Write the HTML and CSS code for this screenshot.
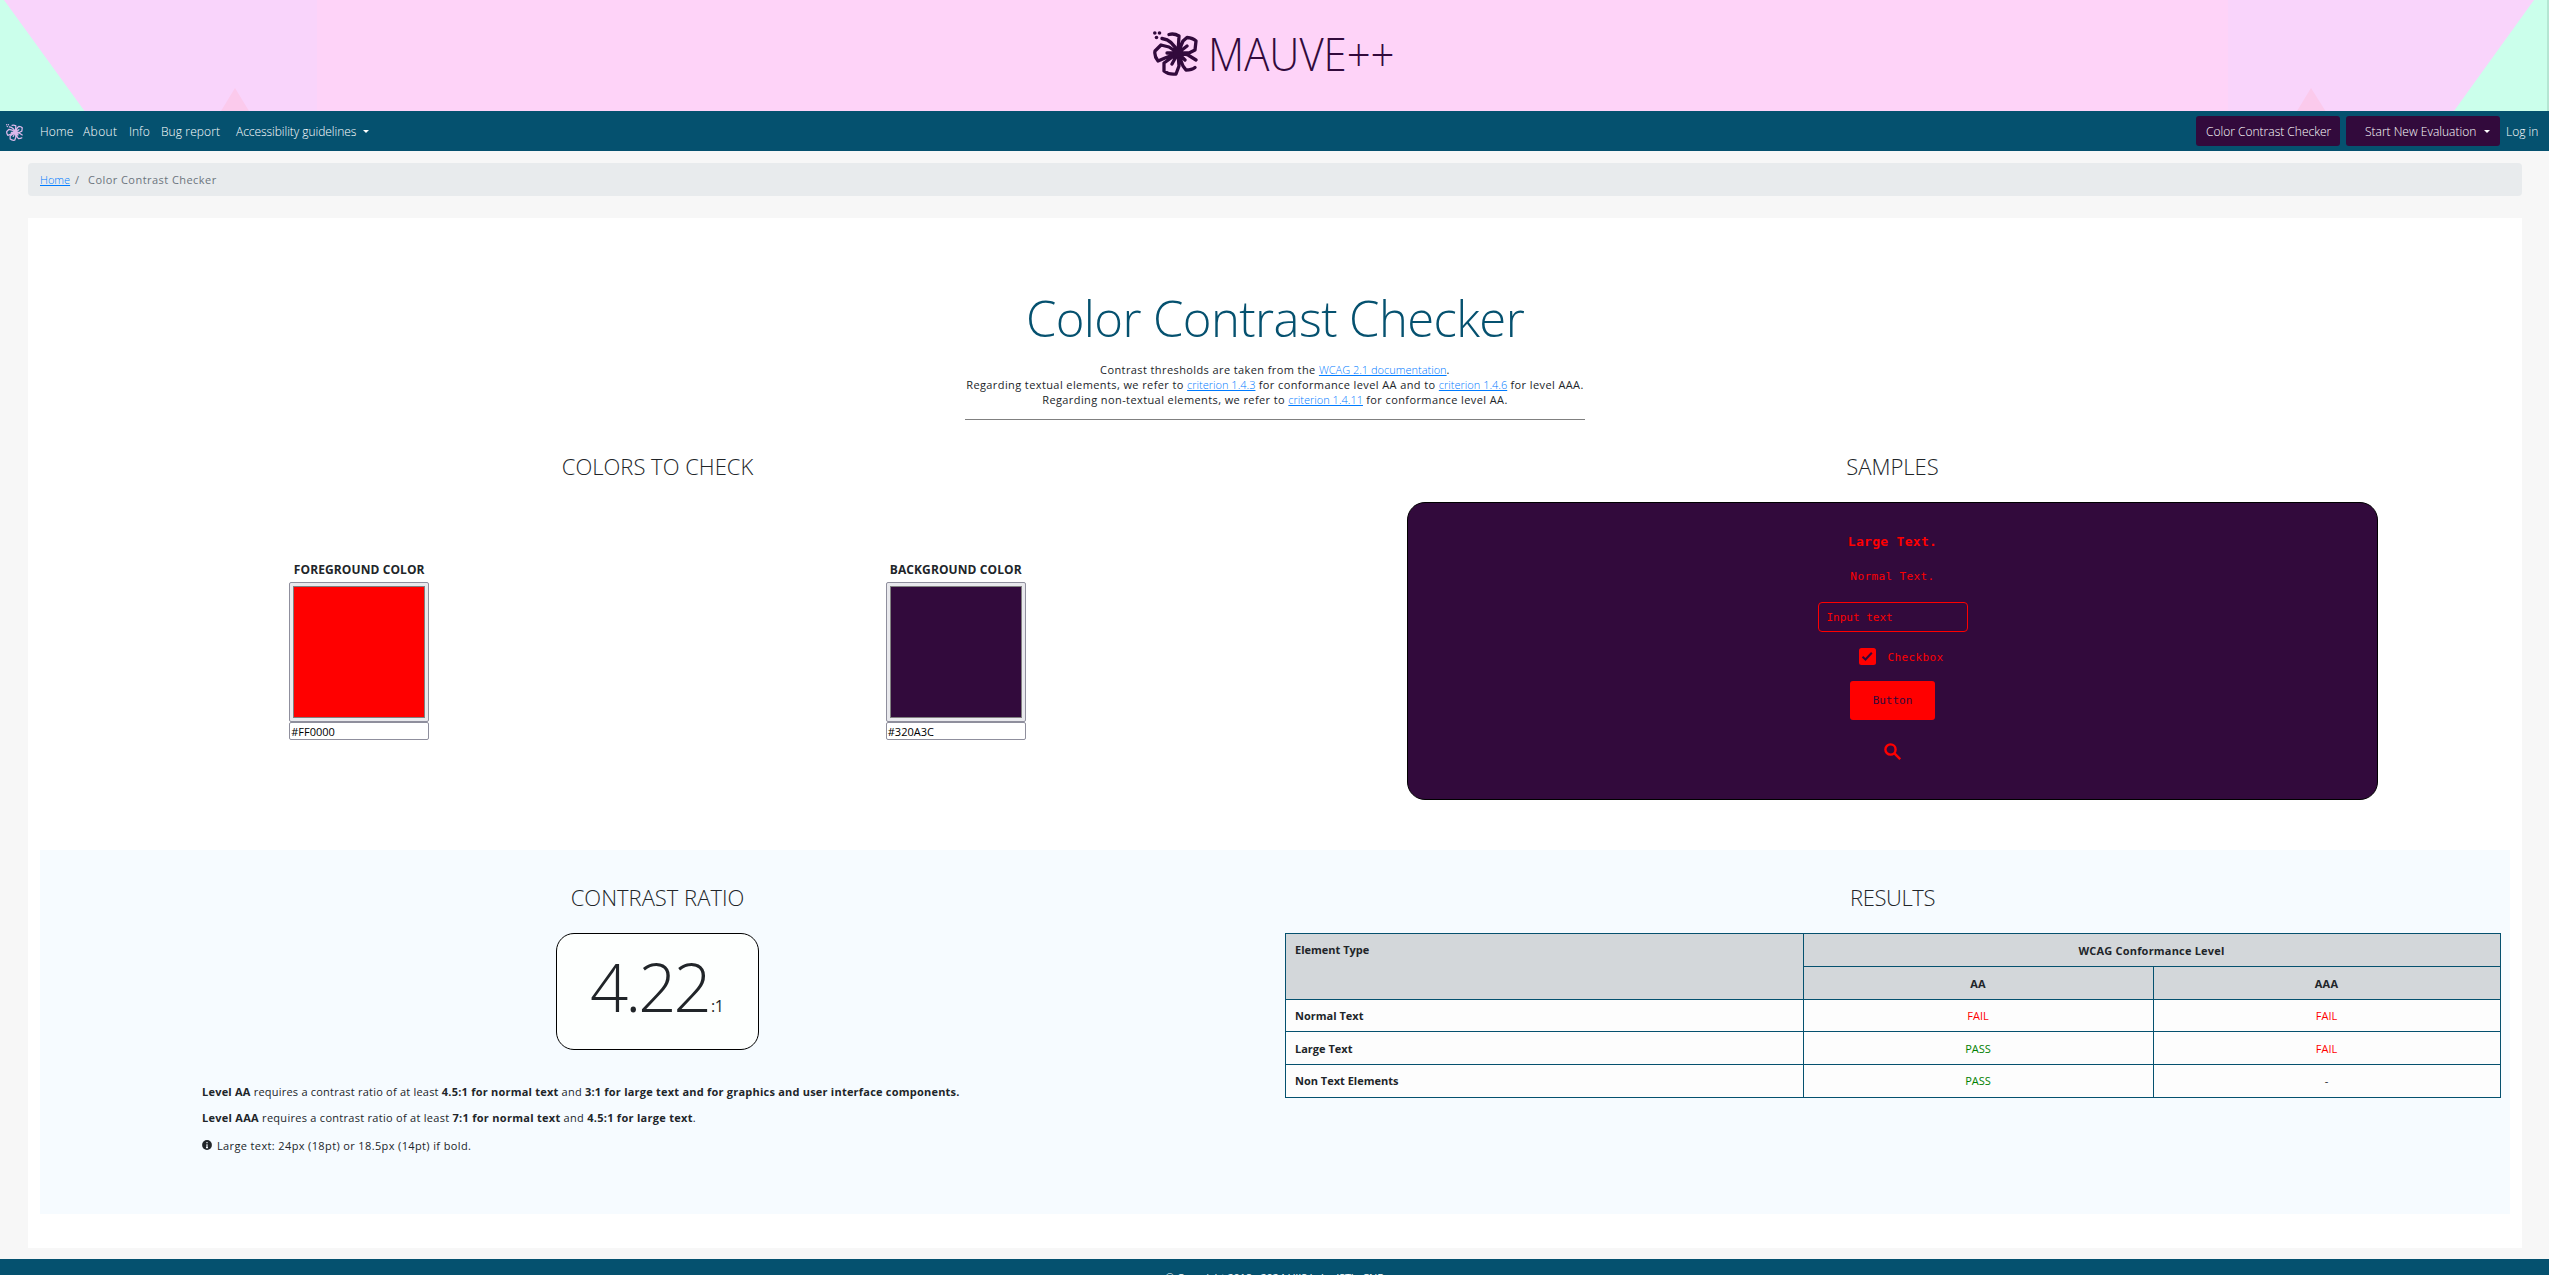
FILE: index.html
```html
<!DOCTYPE html>
<html lang="en">
<head>
<meta charset="utf-8">
<title>Color Contrast Checker - MAUVE++</title>
<link rel="stylesheet" href="styles.css">
</head>
<body>
<svg class="defs" width="0" height="0" aria-hidden="true">
  <symbol id="flower" viewBox="0 0 45 45">
    <g fill="none" stroke="currentColor" stroke-width="3.3" stroke-linecap="round" stroke-linejoin="round">
      <path d="M25 22 L26 5 Q21 2 16 3.500M25 22 Q20 9 9 7.500M25 22 L30 10 34 6.500 Q40 7 43 10 L42 19 36 22 25 22M25 22 L35 24 43 29M25 22 L30 35 33 39 Q39 39 42 36.500M25 22 L26 35 23 43 Q16 44 11 40 L11 32 25 22M25 22 L12 27 5 30 Q1 25 2 20 L8 14 16 16 25 22M25 22 L14 22M25 22 L19 33M25 22 L34 15M25 22 L32 29"/>
    </g>
    <circle cx="25" cy="22" r="5" fill="currentColor"/>
    <g fill="currentColor"><circle cx="1.800" cy="2" r="1.800"/><circle cx="6.500" cy="2" r="1.800"/><circle cx="3.500" cy="6.500" r="1.800"/></g>
  </symbol>
</svg>
<header class="banner">
  <svg class="banner-art" viewBox="0 0 2549 111" aria-hidden="true">
    <path fill="#f9d4fb" d="M0 0H317V111H0zM2228 0H2549V111H2228z"/>
    <path fill="#cbffeb" d="M0 0H4L84.500 111H0zM2549 0H2534L2454 111H2549z"/>
    <path fill="#fbcaec" d="M235 88L249 111H221zM2311 88L2325.500 111H2297z"/>
    <path fill="#b5e6d3" d="M2547 0H2549V111H2547z"/>
  </svg>
  <svg class="logo"><use href="#flower"/></svg>
  <span class="wordmark">MAUVE++</span>
</header>
<nav class="navbar">
  <svg class="brand"><use href="#flower"/></svg>
  <a class="home">Home</a><a class="about">About</a><a class="info">Info</a><a class="bug">Bug report</a><a class="guide">Accessibility guidelines</a><i class="caret"></i>
  <a class="btn btn-checker">Color Contrast Checker</a>
  <a class="btn btn-start">Start New Evaluation<i class="caret"></i></a>
  <a class="login">Log in</a>
</nav>
<nav class="breadcrumb"><span class="crumb"><a class="link">Home</a></span><span class="slash">/</span><span class="current">Color Contrast Checker</span></nav>
<main class="panel">
  <div class="intro">
    <h1>Color Contrast Checker</h1>
    <p>Contrast thresholds are taken from the <a class="link">WCAG 2.1 documentation</a>.</p>
    <p>Regarding textual elements, we refer to <a class="link">criterion 1.4.3</a> for conformance level AA and to <a class="link">criterion 1.4.6</a> for level AAA.</p>
    <p>Regarding non-textual elements, we refer to <a class="link">criterion 1.4.11</a> for conformance level AA.</p>
    <hr>
  </div>
  <div class="columns top">
    <section>
      <h2>COLORS TO CHECK</h2>
      <div class="pickers">
        <div class="picker">
          <label>FOREGROUND COLOR</label>
          <div class="swatch"><div class="swatch-fill red"></div></div>
          <div class="hex">#FF0000</div>
        </div>
        <div class="picker">
          <label>BACKGROUND COLOR</label>
          <div class="swatch"><div class="swatch-fill purple"></div></div>
          <div class="hex">#320A3C</div>
        </div>
      </div>
    </section>
    <section>
      <h2>SAMPLES</h2>
      <div class="samples">
        <div class="s-large">Large Text.</div>
        <div class="s-normal">Normal Text.</div>
        <div class="s-input">Input text</div>
        <div class="s-check">
          <svg class="checkbox" viewBox="0 0 17 17"><rect width="17" height="17" rx="2.500" fill="red"/><path d="M3.500 8.700L6.500 11.500L12.800 4.700" fill="none" stroke="#320a3c" stroke-width="2"/></svg>
          <span>Checkbox</span>
        </div>
        <div class="s-button">Button</div>
        <svg class="search" viewBox="0 0 17 17"><g fill="none" stroke="red" stroke-width="2.400"><circle cx="6.500" cy="6.500" r="5.100"/><path d="M10.200 10.200L16.200 16.200"/></g></svg>
      </div>
    </section>
  </div>
  <div class="columns bottom">
    <section>
      <h2>CONTRAST RATIO</h2>
      <div class="ratio"><span class="ratio-value">4.22</span><span class="ratio-one">:1</span></div>
      <div class="notes">
        <p class="aa"><b>Level AA</b> requires a contrast ratio of at least <b>4.5:1 for normal text</b> and <b>3:1 for large text and for graphics and user interface components.</b></p>
        <p><b>Level AAA</b> requires a contrast ratio of at least <b>7:1 for normal text</b> and <b>4.5:1 for large text</b>.</p>
        <p class="hint"><svg class="info-icon" viewBox="0 0 10 10"><circle cx="5" cy="5" r="4.900" fill="#212529"/><path d="M5 2V3.300M5 4.300V7.800M4 7.600H6" stroke="#f6fbff" stroke-width="1.200"/></svg><span>Large text: 24px (18pt) or 18.5px (14pt) if bold.</span></p>
      </div>
    </section>
    <section>
      <h2 class="results-title">RESULTS</h2>
      <table>
        <colgroup><col class="c1"><col class="c2"><col class="c3"></colgroup>
        <thead>
          <tr><th rowspan="2" class="type">Element Type</th><th colspan="2" class="level">WCAG Conformance Level</th></tr>
          <tr><th class="level">AA</th><th class="level">AAA</th></tr>
        </thead>
        <tbody>
          <tr class="short"><th>Normal Text</th><td class="fail">FAIL</td><td class="fail">FAIL</td></tr>
          <tr><th>Large Text</th><td class="pass">PASS</td><td class="fail">FAIL</td></tr>
          <tr class="last"><th>Non Text Elements</th><td class="pass">PASS</td><td>-</td></tr>
        </tbody>
      </table>
    </section>
  </div>
</main>
<footer>© Copyright 2018 - 2024 HIIS Lab - ISTI - CNR</footer>
</body>
</html>
```
FILE: styles.css
```css
* { box-sizing: border-box; }
body { margin: 0; height: 1275px; overflow: hidden; background: #f7f7f7; color: #212529; font: 400 11px/15px "Open Sans", "Noto Sans", sans-serif; }
h1, h2, p { margin: 0; font-weight: 300; }
.defs { display: none; }

.banner { position: relative; height: 111px; background: #fed3f8; display: flex; padding-left: 1153px; color: #320a3c; }
.banner-art { position: absolute; inset: 0; width: 100%; height: 111px; }
.logo { position: relative; width: 45px; height: 45px; margin-top: 31px; }
.wordmark { position: relative; margin: 23px 0 0 10px; font: 300 46px/60px "Open Sans", sans-serif; white-space: nowrap; transform: scaleX(.91); transform-origin: left; }

.navbar { height: 40px; background: #05516f; color: #fff; display: flex; align-items: center; font-size: 12px; font-weight: 300; white-space: nowrap; }
.brand { width: 17px; height: 17px; margin: 3px 17px 0 6px; color: #ddb8ea; }
.home { width: 43px; letter-spacing: .2px; }
.about { width: 46px; letter-spacing: .4px; }
.info { width: 32px; }
.bug { width: 75px; letter-spacing: .1px; }
.guide { width: 127px; letter-spacing: -.05px; }
.caret { border: 3px solid transparent; border-top-color: #fff; border-bottom: 0; }
.btn { height: 30px; background: #320a3c; border-radius: 3px; display: flex; align-items: center; }
.btn-checker { width: 144px; padding-left: 10px; margin-left: auto; margin-right: 6px; }
.btn-start { width: 154px; padding-left: 19px; margin-right: 6px; }
.btn-start .caret { margin-left: 8px; }
.login { width: 43px; }

.breadcrumb { margin: 12px 27px 22px 28px; height: 33px; background: #e8ebed; border-radius: 4px; padding: 0 12px; display: flex; align-items: center; color: #6c757d; white-space: nowrap; }
.link { color: #007bff; font-weight: 300; text-decoration: underline; letter-spacing: 0; }
.crumb { width: 35px; }
.slash { width: 13px; }
.current { letter-spacing: .45px; }

.panel { margin: 0 27px 11px 28px; height: 1030px; background: #fff; padding: 0 12px; }
.intro { width: 620px; margin: 0 auto; padding-top: 65px; height: 227px; text-align: center; white-space: nowrap; }
h1 { font-size: 49px; line-height: 70px; margin-bottom: 9px; color: #05516f; letter-spacing: -.6px; }
hr { margin: 12px 0 0; border: 0; border-top: 1px solid #808080; }
.intro p { font-weight: 400; letter-spacing: .4px; }

.columns { display: grid; grid-template-columns: 1fr 1fr; }
.top { height: 405px; }
.bottom { height: 364px; background: #f6fbff; padding-top: 32px; }
h2 { font-size: 22px; line-height: 30px; text-align: center; white-space: nowrap; }
.top h2 { margin: 6px 0 1px; }
.results-title { letter-spacing: -.4px; }

.pickers { display: grid; grid-template-columns: 1fr 1fr; padding: 78px 21px 0; }
.picker { width: 140px; justify-self: center; display: flex; flex-direction: column; }
.picker label { font-size: 12px; font-weight: 700; line-height: 19px; margin-bottom: 3px; align-self: center; white-space: nowrap; letter-spacing: .1px; }
.swatch { height: 140px; padding: 3px; background: #e9e9ed; border: 1px solid #8f8f9d; border-radius: 2px; }
.swatch-fill { height: 132px; border: 1px solid #808080; }
.red { background: #f00; }
.purple { background: #320a3c; }
.hex { height: 18px; line-height: 17px; border: 1px solid #8f8f9d; border-radius: 2px; padding-left: 1px; color: #000; }

.samples { width: 971px; height: 298px; margin: 21px auto 0; background: #320a3c; border: 1px solid #000; border-radius: 18px; color: #f00; display: flex; flex-direction: column; align-items: center; font-family: "DejaVu Sans Mono", monospace; white-space: nowrap; }
.s-large { margin-top: 29px; font-size: 13px; font-weight: 700; line-height: 20px; letter-spacing: .3px; }
.s-normal { margin-top: 15px; height: 18px; line-height: 20px; letter-spacing: .4px; }
.s-input { margin-top: 17px; width: 150px; height: 30px; border: 1px solid #f00; border-radius: 4px; padding-left: 8px; line-height: 30px; }
.s-check { margin: 16px 0 0 17px; height: 17px; line-height: 17px; display: flex; gap: 12px; letter-spacing: .35px; }
.s-check span { padding-top: 1px; }
.checkbox { width: 17px; height: 17px; }
.s-button { margin-top: 16px; width: 85px; height: 39px; border-radius: 3px; background: #f00; color: #320a3c; line-height: 40px; text-align: center; }
.search { width: 17px; height: 17px; margin-top: 23px; }

.ratio { width: 203px; height: 117px; margin: 21px auto 0; background: #fdfffe; border: 1px solid #000; border-radius: 18px; display: flex; align-items: baseline; padding-left: 33px; font-weight: 300; line-height: 105px; }
.ratio-value { font-size: 67px; width: 121px; letter-spacing: -3px; }
.ratio-one { font-size: 16px; font-weight: 400; letter-spacing: -.5px; }
.notes { padding: 34px 0 0 162px; white-space: nowrap; }
.notes p { line-height: 16px; font-weight: 400; margin-bottom: 10px; letter-spacing: .28px; }
.notes .aa { letter-spacing: .22px; }
.notes b { font-weight: 700; }
.notes .hint { display: flex; align-items: center; padding-top: 2px; letter-spacing: .37px; }
.info-icon { width: 10px; height: 10px; margin: -3px 5px 0 0; }

table { width: 1215px; margin: 21px 0 0 10px; border-collapse: collapse; table-layout: fixed; background: #fdfdfd; }
.c1 { width: 518px; }
.c2 { width: 350px; }
.c3 { width: 347px; }
th, td { height: 33px; padding: 0 10px 0 9px; border: 1px solid #05516f; text-align: center; vertical-align: middle; }
.short th, .short td { height: 32px; }
.last th, .last td { padding-bottom: 2px; }
thead th { background: #d3d7da; }
tbody th, .type { text-align: left; }
thead .type { vertical-align: top; padding-top: 8px; }
.level { letter-spacing: .2px; }
.fail { color: #f00; }
.pass { color: #008000; }

footer { height: 16px; padding-top: 11px; background: #05516f; color: #fff; text-align: center; white-space: nowrap; letter-spacing: -.2px; }
```
